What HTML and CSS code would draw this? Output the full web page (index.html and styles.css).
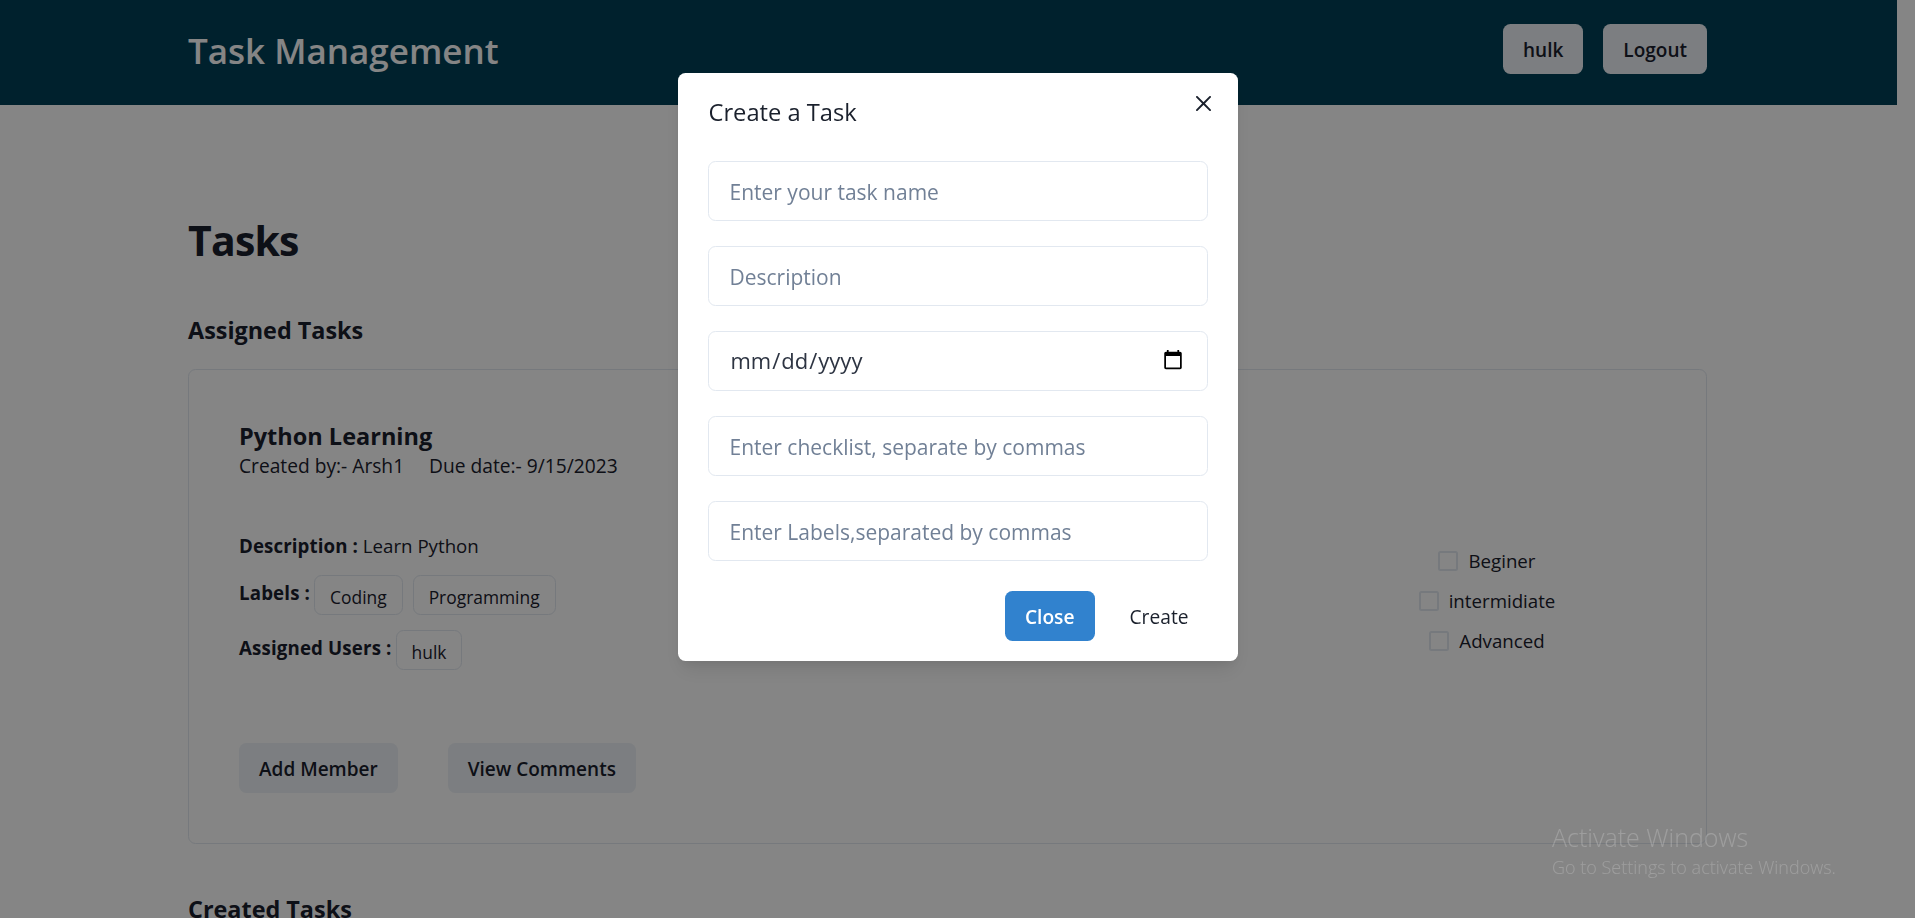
FILE: index.html
```html
<!DOCTYPE html>
<html lang="en">
<head>
    <meta charset="UTF-8">
    <meta name="viewport" content="width=device-width, initial-scale=1.0">
    <title>Task Management</title>
    <link rel="stylesheet" href="styles.css">
</head>
<body>
    <div class="page">
        <header class="topbar">
            <h2 class="brand">Task Management</h2>
            <nav class="topbar-actions">
                <button class="btn" type="button">hulk</button>
                <button class="btn" type="button">Logout</button>
            </nav>
        </header>
        <main class="content">
            <h1 class="page-title">Tasks</h1>
            <h3 class="section-title">Assigned Tasks</h3>
            <section class="card">
                <h4 class="task-name">Python Learning</h4>
                <p class="task-meta"><span>Created by:- Arsh1</span><span>Due date:- 9/15/2023</span></p>
                <div class="task-body">
                    <div class="task-details">
                        <p class="detail-line"><b>Description :</b> Learn Python</p>
                        <div class="tag-row">
                            <b class="tag-label">Labels :</b>
                            <span class="tag">Coding</span>
                            <span class="tag">Programming</span>
                        </div>
                        <div class="tag-row">
                            <b class="tag-label">Assigned Users :</b>
                            <span class="tag">hulk</span>
                        </div>
                    </div>
                    <div class="checks">
                        <label class="check"><input type="checkbox"><span>Beginer</span></label>
                        <label class="check"><input type="checkbox"><span>intermidiate</span></label>
                        <label class="check"><input type="checkbox"><span>Advanced</span></label>
                    </div>
                </div>
                <div class="task-actions">
                    <button class="btn" type="button">Add Member</button>
                    <button class="btn" type="button">View Comments</button>
                </div>
            </section>
            <h3 class="section-title created">Created Tasks</h3>
        </main>
    </div>

    <div class="overlay">
        <div class="modal">
            <button class="modal-close" type="button" aria-label="Close">
                <svg viewBox="0 0 24 24" width="15" height="15"><path fill="currentColor" d="M.439,21.44a1.5,1.5,0,0,0,2.122,2.121L11.823,14.3a.25.25,0,0,1,.354,0l9.262,9.263a1.5,1.5,0,0,0,2.122-2.121L14.3,12.177a.25.25,0,0,1,0-.354l9.263-9.262A1.5,1.5,0,0,0,21.439.44L12.177,9.7a.25.25,0,0,1-.354,0L2.561.44A1.5,1.5,0,0,0,.439,2.561L9.7,11.823a.25.25,0,0,1,0,.354Z"/></svg>
            </button>
            <h2 class="modal-title">Create a Task</h2>
            <form class="modal-form">
                <input class="field" type="text" placeholder="Enter your task name">
                <input class="field" type="text" placeholder="Description">
                <input class="field field-date" type="date">
                <input class="field" type="text" placeholder="Enter checklist, separate by commas">
                <input class="field" type="text" placeholder="Enter Labels,separated by commas">
            </form>
            <div class="modal-footer">
                <button class="btn btn-primary" type="button">Close</button>
                <button class="btn btn-ghost" type="button">Create</button>
            </div>
        </div>
    </div>

    <div class="watermark">
        <div class="watermark-title">Activate Windows</div>
        <div class="watermark-sub">Go to Settings to activate Windows.</div>
    </div>
</body>
</html>
```

FILE: styles.css
```css
* {
    box-sizing: border-box;
}
html, body {
    margin: 0;
    height: 100%;
    overflow: hidden;
}
body {
    font-family: "Open Sans", "Noto Sans", sans-serif;
    font-size: 18.7px;
    line-height: 30px;
    color: #1a202c;
    background: #fff;
}
h1, h2, h3, h4, p {
    margin: 0;
}
button, input {
    font-family: inherit;
}

.page {
    margin-right: 18px;
}
.topbar {
    height: 105px;
    background: #004057;
    padding: 0 190px 0 188px;
    display: flex;
    justify-content: space-between;
    align-items: flex-start;
}
.brand {
    color: #fff;
    font-size: 35px;
    font-weight: 600;
    line-height: 45px;
    margin-top: 28px;
}
.topbar-actions {
    display: flex;
    gap: 20px;
    margin-top: 24px;
}

.btn {
    height: 50px;
    padding: 1px 20px 0;
    border: 0;
    border-radius: 7.5px;
    background: #edf2f7;
    color: #1a202c;
    font-size: 19px;
    font-weight: 600;
}
.btn-primary {
    background: #3182ce;
    color: #fff;
    font-size: 19.2px;
}
.btn-ghost {
    background: transparent;
    font-size: 19.2px;
    font-weight: 500;
}

.content {
    padding: 108px 190px 0 188px;
}
.page-title {
    font-size: 41px;
    line-height: 54px;
    font-weight: 700;
    letter-spacing: -.8px;
}
.section-title {
    font-size: 23.4px;
    line-height: 30px;
    font-weight: 700;
    margin-top: 48px;
}
.section-title.created {
    margin-top: 50px;
}

.card {
    margin-top: 24px;
    border: 1px solid #e2e8f0;
    border-radius: 7.5px;
    padding: 51px 50px 50px;
}
.task-name {
    font-size: 23.5px;
    line-height: 30px;
    font-weight: 700;
}
.task-meta {
    display: flex;
    gap: 25px;
    font-size: 19.2px;
}
.task-body {
    display: flex;
    justify-content: space-between;
    margin-top: 50px;
}
.detail-line b {
    font-weight: 700;
    letter-spacing: .1px;
}
.tag-row {
    display: flex;
    align-items: flex-start;
    gap: 4px;
    margin-top: 15px;
}
.detail-line + .tag-row {
    margin-top: 14px;
}
.tag-label {
    margin-top: 3px;
    font-weight: 700;
    letter-spacing: .15px;
}
.tag {
    height: 40px;
    padding: 6px 15px 0;
    border: 1px solid #e2e8f0;
    border-radius: 7.5px;
    font-size: 17.4px;
    font-weight: 500;
}
.tag + .tag {
    margin-left: 6px;
}
.checks {
    width: 338px;
    margin-top: 10px;
    display: flex;
    flex-direction: column;
    align-items: center;
}
.check {
    height: 40px;
    display: flex;
    align-items: center;
    gap: 10px;
}
.check input {
    appearance: none;
    width: 20px;
    height: 20px;
    margin: 0;
    border: 2px solid #e2e8f0;
    border-radius: 2.5px;
    background: #fff;
}
.task-actions {
    display: flex;
    gap: 50px;
    margin-top: 73px;
}

/* modal */
.overlay {
    position: fixed;
    inset: 0;
    background: rgba(0, 0, 0, .48);
    display: flex;
    justify-content: center;
    align-items: flex-start;
    padding-top: 73px;
}
.modal {
    position: relative;
    width: 560px;
    background: #fff;
    border-radius: 7.5px;
    box-shadow: 0 12px 20px -4px rgba(0, 0, 0, .1), 0 5px 8px -2px rgba(0, 0, 0, .05);
}
.modal-close {
    position: absolute;
    top: 10px;
    right: 14px;
    width: 40px;
    height: 40px;
    padding: 0;
    border: 0;
    background: transparent;
    color: #1a202c;
    display: flex;
    align-items: center;
    justify-content: center;
}
.modal-title {
    padding: 21px 30px 19px 31px;
    font-size: 23.7px;
    line-height: 37.5px;
    font-weight: 500;
}
.modal-form {
    padding: 10px 30px;
    display: flex;
    flex-direction: column;
    gap: 25px;
}
.field {
    width: 100%;
    height: 60px;
    padding: 2px 21px 0;
    border: 1px solid #e2e8f0;
    border-radius: 7.5px;
    background: #fff;
    color: #1a202c;
    font-size: 21px;
    outline: 0;
}
.field::placeholder {
    color: #718096;
}
.field-date {
    padding-top: 0;
    padding-bottom: 2px;
    font-size: 22px;
    color: #2d3442;
}
.modal-footer {
    padding: 20px 29px 20px 30px;
    display: flex;
    justify-content: flex-end;
    gap: 15px;
}
.modal-footer .btn {
    padding-top: 2px;
}

.watermark {
    position: fixed;
    left: 1552px;
    top: 818px;
    color: rgba(255, 255, 255, .2);
    font-weight: 300;
}
.watermark-title {
    font-size: 25px;
    line-height: 38px;
}
.watermark-sub {
    font-size: 18px;
    line-height: 22px;
}
```
